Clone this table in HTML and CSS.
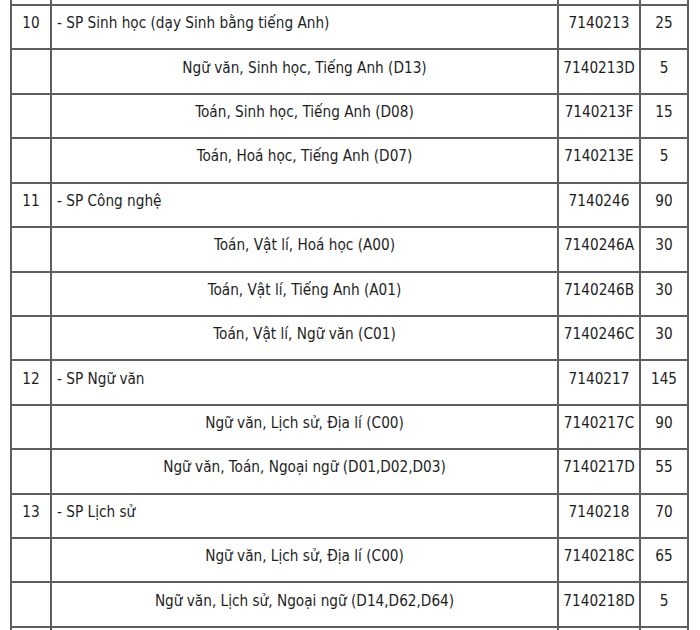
FILE: index.html
```html
<!DOCTYPE html>
<html lang="vi">
<head>
<meta charset="utf-8">
<title>Chỉ tiêu tuyển sinh</title>
<link rel="stylesheet" href="styles.css">
</head>
<body>
<div class="wrap">
<table class="quota">
<colgroup>
<col class="c-no">
<col class="c-name">
<col class="c-code">
<col class="c-num">
</colgroup>
<tbody>
<tr class="cut"><td></td><td></td><td></td><td></td></tr>
<tr><td class="no">10</td><td class="major">- SP Sinh học (dạy Sinh bằng tiếng Anh)</td><td class="code">7140213</td><td class="num">25</td></tr>
<tr><td></td><td class="combo">Ngữ văn, Sinh học, Tiếng Anh (D13)</td><td class="code">7140213D</td><td class="num">5</td></tr>
<tr><td></td><td class="combo">Toán, Sinh học, Tiếng Anh (D08)</td><td class="code">7140213F</td><td class="num">15</td></tr>
<tr><td></td><td class="combo">Toán, Hoá học, Tiếng Anh (D07)</td><td class="code">7140213E</td><td class="num">5</td></tr>
<tr><td class="no">11</td><td class="major">- SP Công nghệ</td><td class="code">7140246</td><td class="num">90</td></tr>
<tr><td></td><td class="combo">Toán, Vật lí, Hoá học (A00)</td><td class="code">7140246A</td><td class="num">30</td></tr>
<tr><td></td><td class="combo">Toán, Vật lí, Tiếng Anh (A01)</td><td class="code">7140246B</td><td class="num">30</td></tr>
<tr><td></td><td class="combo">Toán, Vật lí, Ngữ văn (C01)</td><td class="code">7140246C</td><td class="num">30</td></tr>
<tr><td class="no">12</td><td class="major">- SP Ngữ văn</td><td class="code">7140217</td><td class="num">145</td></tr>
<tr><td></td><td class="combo">Ngữ văn, Lịch sử, Địa lí (C00)</td><td class="code">7140217C</td><td class="num">90</td></tr>
<tr><td></td><td class="combo">Ngữ văn, Toán, Ngoại ngữ (D01,D02,D03)</td><td class="code">7140217D</td><td class="num">55</td></tr>
<tr><td class="no">13</td><td class="major">- SP Lịch sử</td><td class="code">7140218</td><td class="num">70</td></tr>
<tr><td></td><td class="combo">Ngữ văn, Lịch sử, Địa lí (C00)</td><td class="code">7140218C</td><td class="num">65</td></tr>
<tr><td></td><td class="combo">Ngữ văn, Lịch sử, Ngoại ngữ (D14,D62,D64)</td><td class="code">7140218D</td><td class="num">5</td></tr>
<tr><td></td><td></td><td></td><td></td></tr>
</tbody>
</table>
</div>
</body>
</html>
```

FILE: styles.css
```css
html, body {
  margin: 0;
  padding: 0;
  background: #ffffff;
  overflow: hidden;
}

.wrap {
  padding-left: 10px;
  height: 630px;
  overflow: hidden;
}

.quota {
  border-collapse: collapse;
  table-layout: fixed;
  width: 679px;
  font-family: "DejaVu Sans Condensed", "DejaVu Sans", sans-serif;
  font-stretch: condensed;
  font-size: 15.2px;
  color: #1e1e1e;
  margin-top: 0;
}

.c-no { width: 40px; }
.c-name { width: 507px; }
.c-code { width: 82px; }
.c-num { width: 48px; }

.quota td {
  border: 2px solid #5e5e5e;
  height: 44.43px;
  padding: 0 5px 8px;
  box-sizing: border-box;
  vertical-align: middle;
  white-space: nowrap;
}

.quota tr.cut td {
  height: 5px;
  padding: 0;
  border-top: 0;
}

.no, .combo, .code, .num {
  text-align: center;
}

.quota td.code {
  padding-left: 2px;
  padding-right: 2px;
}

.major {
  text-align: left;
}
```
